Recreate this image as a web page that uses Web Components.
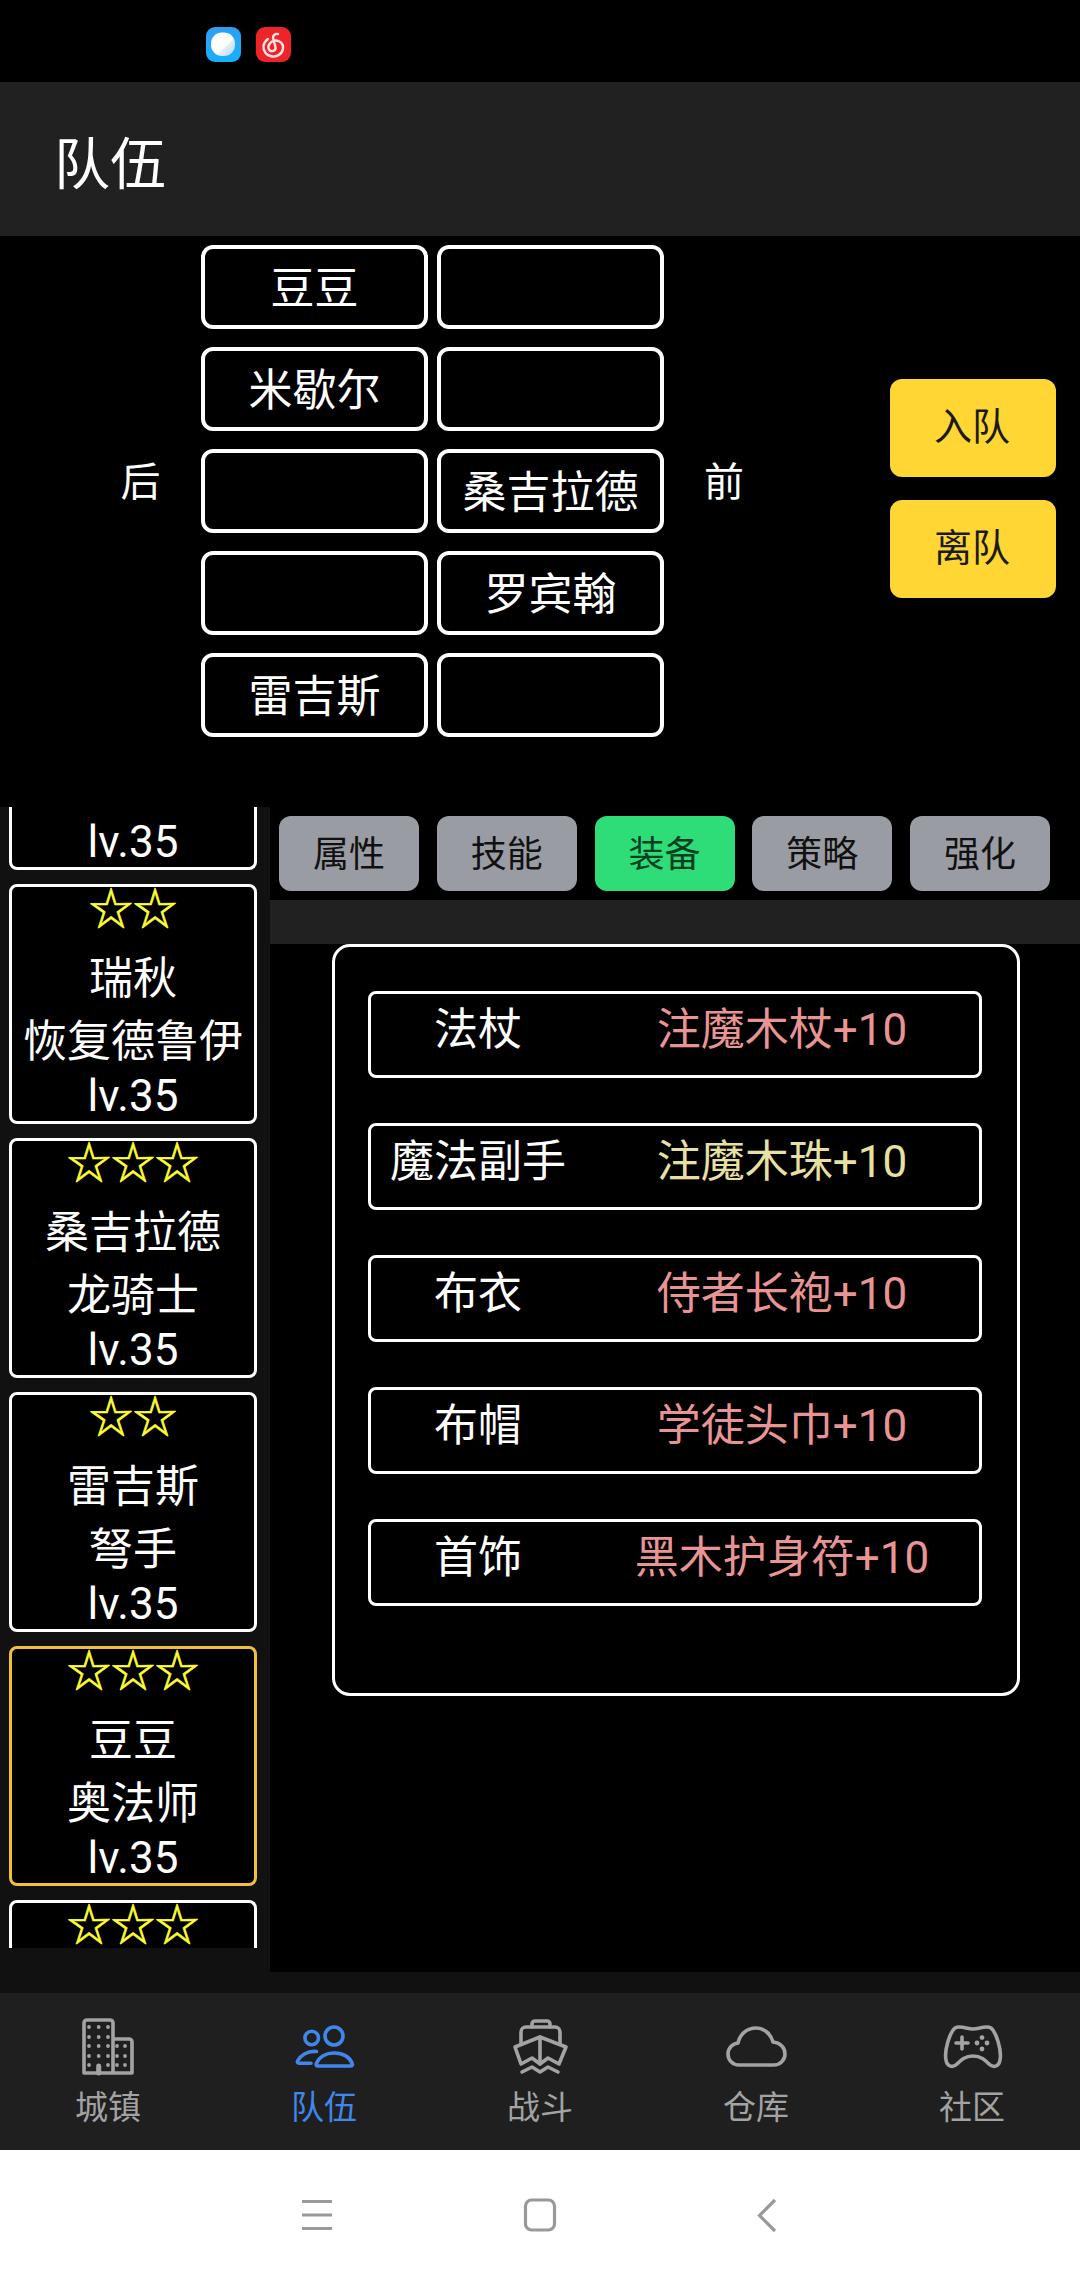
<!DOCTYPE html>
<html lang="zh-CN">
<head>
<meta charset="utf-8">
<title>队伍</title>
<style>
	html, body { margin: 0; padding: 0; background: #000; }
	body {
		width: 1080px;
		height: 2280px;
		overflow: hidden;
		font-family: Roboto, "Noto Sans CJK SC", sans-serif;
		color: #fff;
	}
</style>
</head>
<body>
<game-app>
	<status-bar></status-bar>
	<page-header>队伍</page-header>
	<team-formation>
		<team-slot>豆豆</team-slot><team-slot></team-slot>
		<team-slot>米歇尔</team-slot><team-slot></team-slot>
		<team-slot></team-slot><team-slot>桑吉拉德</team-slot>
		<team-slot></team-slot><team-slot>罗宾翰</team-slot>
		<team-slot>雷吉斯</team-slot><team-slot></team-slot>
		<team-button slot="actions">入队</team-button>
		<team-button slot="actions">离队</team-button>
	</team-formation>
	<main-split>
		<hero-list slot="list">
			<hero-card cut="top"><span slot="level">lv.35</span></hero-card>
			<hero-card><span slot="stars">☆☆</span><span slot="name">瑞秋</span><span slot="role">恢复德鲁伊</span><span slot="level">lv.35</span></hero-card>
			<hero-card><span slot="stars">☆☆☆</span><span slot="name">桑吉拉德</span><span slot="role">龙骑士</span><span slot="level">lv.35</span></hero-card>
			<hero-card><span slot="stars">☆☆</span><span slot="name">雷吉斯</span><span slot="role">弩手</span><span slot="level">lv.35</span></hero-card>
			<hero-card selected><span slot="stars">☆☆☆</span><span slot="name">豆豆</span><span slot="role">奥法师</span><span slot="level">lv.35</span></hero-card>
			<hero-card cut="bottom"><span slot="stars">☆☆☆</span></hero-card>
		</hero-list>
		<detail-pane>
			<detail-tab slot="tabs">属性</detail-tab>
			<detail-tab slot="tabs">技能</detail-tab>
			<detail-tab slot="tabs" active>装备</detail-tab>
			<detail-tab slot="tabs">策略</detail-tab>
			<detail-tab slot="tabs">强化</detail-tab>
			<equip-row style="--value-color:#e89494"><span slot="label">法杖</span><span slot="value">注魔木杖+10</span></equip-row>
			<equip-row style="--value-color:#e8e0a2"><span slot="label">魔法副手</span><span slot="value">注魔木珠+10</span></equip-row>
			<equip-row style="--value-color:#e89494"><span slot="label">布衣</span><span slot="value">侍者长袍+10</span></equip-row>
			<equip-row style="--value-color:#e89494"><span slot="label">布帽</span><span slot="value">学徒头巾+10</span></equip-row>
			<equip-row style="--value-color:#e89494"><span slot="label">首饰</span><span slot="value">黑木护身符+10</span></equip-row>
		</detail-pane>
	</main-split>
	<bottom-nav>
		<nav-item icon="town">城镇</nav-item>
		<nav-item icon="team" active>队伍</nav-item>
		<nav-item icon="battle">战斗</nav-item>
		<nav-item icon="storage">仓库</nav-item>
		<nav-item icon="community">社区</nav-item>
	</bottom-nav>
	<system-nav></system-nav>
</game-app>

<script>
// small helper, every element just sets its shadow markup once
class Base extends HTMLElement {
	constructor() {
		super();
		this.attachShadow({ mode: "open" });
		this.shadowRoot.innerHTML = this.markup();
	}
	markup() {
		return "<slot></slot>";
	}
}

class GameApp extends Base {
	markup() {
		return `<style>:host { display: flex; flex-direction: column; width: 1080px; height: 2280px; background: #000; }</style><slot></slot>`;
	}
}

class StatusBar extends Base {
	markup() {
		return `
		<style>
			:host { display: flex; height: 82px; box-sizing: border-box; padding: 27px 0 0 206px; gap: 15px; background: #000; }
			svg { width: 35px; height: 35px; display: block; }
		</style>
		<svg viewBox="0 0 35 35">
			<defs>
				<linearGradient id="b" x1="0" y1="0" x2="0" y2="1"><stop offset="0" stop-color="#2f9ff2"/><stop offset="1" stop-color="#17b0ff"/></linearGradient>
				<linearGradient id="w" x1="0" y1="0" x2="1" y2="1"><stop offset=".58" stop-color="#fff"/><stop offset=".62" stop-color="#e4eef8"/><stop offset="1" stop-color="#b4d6f4"/></linearGradient>
			</defs>
			<rect width="35" height="35" rx="9" fill="url(#b)"/>
			<rect x="5" y="5.5" width="24" height="23.500" rx="11" fill="url(#w)"/>
		</svg>
		<svg viewBox="0 0 35 35">
			<rect width="35" height="35" rx="9" fill="#ee2528"/>
			<path d="M22 7C19 6.500 17 8 17 11L19.500 20C20.500 24 15 25.500 13 22.500C11 18.500 14.500 14 19 13.500C24 13 27.500 17 27 21.500C26.500 26.500 21.500 30 16.500 29.500C10.500 29 7 24 7.500 19C8 16 9.500 13.800 12 12" fill="none" stroke="#fde3e3" stroke-width="2.4" stroke-linecap="round"/>
		</svg>`;
	}
}

class PageHeader extends Base {
	markup() {
		return `
		<style>
			:host { display: flex; align-items: center; height: 154px; box-sizing: border-box; padding-left: 54px; background: #212121; color: #fff; font-size: 56px; }
		</style>
		<slot></slot>`;
	}
}

class TeamFormation extends Base {
	markup() {
		return `
		<style>
			:host { display: grid; grid-template-columns: 201px 463px 226px 166px; height: 571px; box-sizing: border-box; padding-top: 9px; background: #000; font-size: 44px; color: #fff; }
			.side { height: 491px; display: flex; align-items: center; padding-bottom: 24px; box-sizing: border-box; font-size: 40px; }
			.back { justify-content: center; padding-left: 80px; }
			.front { justify-content: center; padding-right: 106px; }
			.grid { display: grid; grid-template-columns: 1fr 1fr; grid-auto-rows: 84px; gap: 18px 9px; align-content: start; }
			.actions { display: flex; flex-direction: column; gap: 23px; padding-top: 134px; }
		</style>
		<div class="side back">后</div>
		<div class="grid"><slot></slot></div>
		<div class="side front">前</div>
		<div class="actions"><slot name="actions"></slot></div>`;
	}
}

class TeamSlot extends Base {
	markup() {
		return `
		<style>
			:host { display: flex; align-items: center; justify-content: center; box-sizing: border-box; border: 4px solid #fff; border-radius: 12px; padding-bottom: 5px; background: #000; }
		</style>
		<slot></slot>`;
	}
}

class TeamButton extends Base {
	markup() {
		return `
		<style>
			:host { display: flex; align-items: center; justify-content: center; height: 98px; border-radius: 12px; background: #ffd633; color: #1a1a1a; font-size: 38px; padding: 0 2px 10px 0; box-sizing: border-box; }
		</style>
		<slot></slot>`;
	}
}

class MainSplit extends Base {
	markup() {
		return `
		<style>
			:host { display: flex; height: 1186px; background: #111; }
		</style>
		<slot name="list"></slot>
		<slot></slot>`;
	}
}

class HeroList extends Base {
	markup() {
		return `
		<style>
			:host { display: flex; flex-direction: column; gap: 14px; width: 270px; height: 1141px; flex: none; box-sizing: border-box; padding: 0 13px 0 9px; }
		</style>
		<slot></slot>`;
	}
}

class HeroCard extends Base {
	markup() {
		return `
		<style>
			:host { display: flex; flex-direction: column; align-items: center; flex: none; height: 240px; box-sizing: border-box; border: 3px solid #fff; border-radius: 8px; background: #000; color: #fff; font-size: 44px; white-space: nowrap; }
			:host([selected]) { border-color: #f2bf3c; }
			:host([cut="top"]) { height: 63px; border-top: 0; border-radius: 0 0 8px 8px; justify-content: flex-end; }
			:host([cut="bottom"]) { height: 48px; border-bottom: 0; border-radius: 8px 8px 0 0; }
			:host([cut="top"]) .stars, :host([cut="top"]) .name, :host([cut="top"]) .role { display: none; }
			:host([cut="bottom"]) .name, :host([cut="bottom"]) .role, :host([cut="bottom"]) .level { display: none; }
			div { display: flex; align-items: center; justify-content: center; flex: none; }
			.stars { height: 40px; line-height: 40px; margin-top: 3px; color: #ffff33; -webkit-text-stroke: 0.7px #ffff33; }
			.name { height: 62px; margin-top: 14px; }
			.role { height: 62px; margin-top: 1px; }
			.level { height: 50px; margin-top: 2px; }
		</style>
		<div class="stars"><slot name="stars"></slot></div>
		<div class="name"><slot name="name"></slot></div>
		<div class="role"><slot name="role"></slot></div>
		<div class="level"><slot name="level"></slot></div>`;
	}
}

class DetailPane extends Base {
	markup() {
		return `
		<style>
			:host { display: block; flex: 1; height: 1165px; background: #000; }
			.tabs { display: flex; gap: 17.75px; height: 93px; box-sizing: border-box; padding: 9px 0 9px 9px; }
			.bar { height: 44px; background: #212121; }
			.panel { display: flex; flex-direction: column; gap: 45px; width: 688px; height: 752px; margin-left: 62px; box-sizing: border-box; border: 3px solid #fff; border-radius: 18px; padding: 44px 0 0 33px; }
		</style>
		<div class="tabs"><slot name="tabs"></slot></div>
		<div class="bar"></div>
		<div class="panel"><slot></slot></div>`;
	}
}

class DetailTab extends Base {
	markup() {
		return `
		<style>
			:host { display: flex; align-items: center; justify-content: center; width: 140px; height: 75px; flex: none; border-radius: 12px; background: #9a9ca3; color: #111; font-size: 36px; padding-bottom: 6px; box-sizing: border-box; }
			:host([active]) { background: #2fdd78; color: #05401f; }
		</style>
		<slot></slot>`;
	}
}

class EquipRow extends Base {
	markup() {
		return `
		<style>
			:host { display: grid; grid-template-columns: 214px 1fr; align-items: center; width: 614px; height: 87px; flex: none; box-sizing: border-box; border: 3px solid #fff; border-radius: 8px; padding-bottom: 20px; font-size: 44px; color: #fff; white-space: nowrap; }
			div { text-align: center; }
			.value { color: var(--value-color, #fff); }
		</style>
		<div><slot name="label"></slot></div>
		<div class="value"><slot name="value"></slot></div>`;
	}
}

class BottomNav extends Base {
	markup() {
		return `
		<style>
			:host { display: grid; grid-template-columns: repeat(5, 216px); height: 157px; background: #1f1f1f; flex: none; }
		</style>
		<slot></slot>`;
	}
}

const NAV_ICONS = {
	town: `<path d="M8 59V9a3 3 0 0 1 3-3h23a3 3 0 0 1 3 3v50M8 59h48V28a3 3 0 0 0-3-3H37"/>
		<path d="M22.7 59v-7" stroke-width="5"/>
		<g fill="currentColor" stroke="none">
			<circle cx="13" cy="13" r="1.9"/><circle cx="22.7" cy="13" r="1.9"/><circle cx="32" cy="13" r="1.9"/>
			<circle cx="13" cy="23" r="1.9"/><circle cx="22.7" cy="23" r="1.9"/><circle cx="32" cy="23" r="1.9"/>
			<circle cx="13" cy="32" r="1.9"/><circle cx="22.7" cy="32" r="1.9"/><circle cx="32" cy="32" r="1.9"/>
			<circle cx="13" cy="42" r="1.9"/><circle cx="22.7" cy="42" r="1.9"/><circle cx="32" cy="42" r="1.9"/>
			<circle cx="13" cy="51" r="1.9"/><circle cx="32" cy="51" r="1.9"/>
			<circle cx="41" cy="32" r="1.9"/><circle cx="49" cy="32" r="1.9"/>
			<circle cx="41" cy="42" r="1.9"/><circle cx="49" cy="42" r="1.9"/>
			<circle cx="41" cy="51" r="1.9"/><circle cx="49" cy="51" r="1.9"/>
		</g>`,
	team: `<circle cx="19.7" cy="24" r="6.8"/><circle cx="42" cy="22" r="9"/>
		<path d="M26 52c-1.5 0-2.2-1-1.7-2.3C27 43 34 39 42.5 39S58 43 60.3 49.7C60.8 51 60 52 58.5 52Z"/>
		<path d="M24.5 37.5C15 36.5 8 42 5.5 47C5 48.5 6 49.3 7.5 49.3H19"/>`,
	battle: `<path d="M24 13v-3a3 3 0 0 1 3-3h12a3 3 0 0 1 3 3v3"/>
		<path d="M13 29V18a5 5 0 0 1 5-5H47a5 5 0 0 1 5 5V29"/>
		<path d="M7 33L32 23L58 33L51 50L40 44L32 50L24 44L13 50Z"/>
		<path d="M32 23V50M14 58L24 53L32 58L40 53L50 58"/>`,
	storage: `<path d="M15 51C8.5 51 4 46 4 40C4 34 8.5 29.5 14 29C16 20 23 14 32 14C40 14 47 20 49 28C56 28.5 61 33.5 61 40C61 46 56 51 50 51Z"/>`,
	community: `<path d="M15 14C20 11 27 15 33 15C39 15 46 11 51 14C56 18 62 36 60 46C59 53 53 54 49 50C45 46 41 42 33 42C25 42 21 46 17 50C13 54 7 53 6 46C4 36 10 18 15 14Z"/>
		<path d="M16 29H28M22 23V35"/>
		<g fill="currentColor" stroke="none">
			<circle cx="42" cy="23.6" r="2.4"/><circle cx="37" cy="29" r="2.4"/><circle cx="47" cy="29" r="2.4"/><circle cx="42" cy="35" r="2.4"/>
		</g>`
};

class NavItem extends Base {
	markup() {
		const icon = NAV_ICONS[this.getAttribute("icon")] || "";
		return `
		<style>
			:host { display: flex; flex-direction: column; align-items: center; padding-top: 21px; color: #a3a3a3; font-size: 33px; }
			:host([active]) { color: #3f87ea; }
			svg { width: 64px; height: 64px; display: block; flex: none; fill: none; stroke: currentColor; stroke-width: 3.6; stroke-linejoin: round; stroke-linecap: round; }
			.label { height: 40px; line-height: 40px; margin-top: 10px; }
		</style>
		<svg viewBox="0 0 64 64">${icon}</svg>
		<div class="label"><slot></slot></div>`;
	}
}

class SystemNav extends Base {
	markup() {
		return `
		<style>
			:host { display: flex; align-items: center; flex: none; height: 130px; box-sizing: border-box; padding: 0 0 0 297px; background: #fff; }
			svg { width: 40px; height: 40px; fill: none; stroke: #999; stroke-width: 3.2; display: block; }
			.home { margin-left: 183px; }
			.back { margin-left: 187px; }
		</style>
		<svg viewBox="0 0 40 40"><path d="M5 6.500H35M5 20H35M5 33.500H35" stroke-width="3"/></svg>
		<svg class="home" viewBox="0 0 40 40"><rect x="5.500" y="5" width="29" height="30" rx="6"/></svg>
		<svg class="back" viewBox="0 0 40 40"><path d="M28 5L12.500 20.500L28 36"/></svg>`;
	}
}

customElements.define("game-app", GameApp);
customElements.define("status-bar", StatusBar);
customElements.define("page-header", PageHeader);
customElements.define("team-formation", TeamFormation);
customElements.define("team-slot", TeamSlot);
customElements.define("team-button", TeamButton);
customElements.define("main-split", MainSplit);
customElements.define("hero-list", HeroList);
customElements.define("hero-card", HeroCard);
customElements.define("detail-pane", DetailPane);
customElements.define("detail-tab", DetailTab);
customElements.define("equip-row", EquipRow);
customElements.define("bottom-nav", BottomNav);
customElements.define("nav-item", NavItem);
customElements.define("system-nav", SystemNav);
</script>
</body>
</html>
